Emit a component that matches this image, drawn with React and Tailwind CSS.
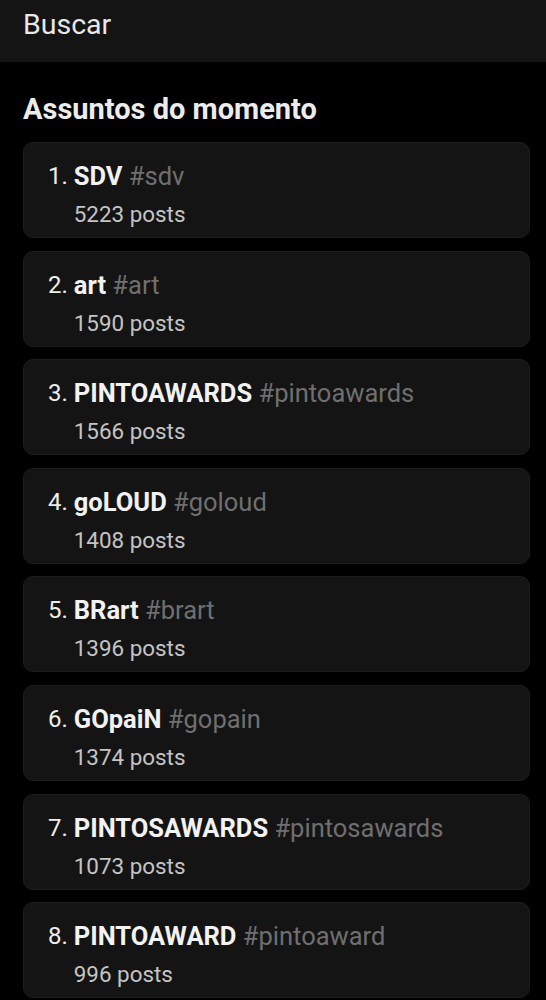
import React from 'react';

const trends = [
  { name: 'SDV', tag: '#sdv', posts: 5223 },
  { name: 'art', tag: '#art', posts: 1590 },
  { name: 'PINTOAWARDS', tag: '#pintoawards', posts: 1566 },
  { name: 'goLOUD', tag: '#goloud', posts: 1408 },
  { name: 'BRart', tag: '#brart', posts: 1396 },
  { name: 'GOpaiN', tag: '#gopain', posts: 1374 },
  { name: 'PINTOSAWARDS', tag: '#pintosawards', posts: 1073 },
  { name: 'PINTOAWARD', tag: '#pintoaward', posts: 996 },
];

const App = () => {
  return (
    <div className="min-h-screen bg-black font-['Roboto',sans-serif]">
      {/* header */}
      <div className="h-[62px] bg-[#141414] pl-[23px] flex items-center pb-[12px]">
        <span className="text-[28.5px] text-[#e8e8e8] leading-none">Buscar</span>
      </div>

      <div className="pl-[23px] pr-[16px]">
        <h2 className="mt-[30px] text-[29px] font-bold text-[#ececec] leading-[34px]">Assuntos do momento</h2>

        <div className="mt-[16px] flex flex-col gap-[12.6px]">
          {trends.map((t, i) => (
            <div
              key={t.tag}
              className="h-[96px] rounded-[10px] bg-[#141414] border border-[#1d1d1d] pl-[24px] pt-[18px] flex"
            >
              <span className="text-[24px] leading-[30px] text-[#eeeeee] whitespace-pre">{i + 1}. </span>
              <div className="flex flex-col">
                <div className="text-[25.5px] leading-[30px]">
                  <span className="font-bold text-[#f2f2f2]">{t.name}</span>{' '}
                  <span className="text-[#6f6f6f]">{t.tag}</span>
                </div>
                <div className="mt-[10px] text-[22.4px] leading-[26px] text-[#c4c4c4]">{t.posts} posts</div>
              </div>
            </div>
          ))}
        </div>
      </div>
    </div>
  );
};

export default App;
